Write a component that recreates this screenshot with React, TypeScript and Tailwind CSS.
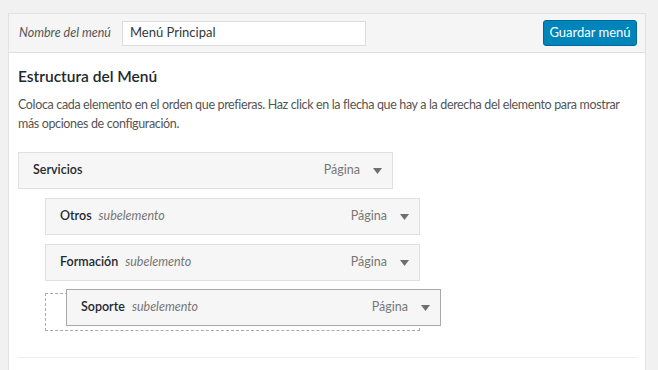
import React from 'react';

type Item = { title: string; sub?: boolean; depth: number };

const items: Item[] = [
  { title: 'Servicios', depth: 0 },
  { title: 'Otros', sub: true, depth: 1 },
  { title: 'Formación', sub: true, depth: 1 },
];

function Arrow() {
  return (
    <svg width="9" height="6" viewBox="0 0 9 6" className="ml-[13px]">
      <path d="M0 0h9L4.5 6z" fill="#6f6f6f" />
    </svg>
  );
}

function MenuItem({ title, sub, extra = '' }: { title: string; sub?: boolean; extra?: string }) {
  return (
    <div className={`w-[375px] h-[37px] flex items-center pl-[14px] pr-[10px] bg-[#f6f6f6] border ${extra}`}>
      <span className="font-semibold text-[#23282d]">{title}</span>
      {sub && <span className="ml-[7px] italic text-[#777]">subelemento</span>}
      <span className="ml-auto text-[#777]">Página</span>
      <Arrow />
    </div>
  );
}

export default function App() {
  return (
    <div
      className="w-[658px] h-[370px] bg-[#f1f1f1] pt-[13px] pl-[8px] overflow-hidden text-[12.5px] text-[#444]"
      style={{ fontFamily: 'Lato, "Open Sans", sans-serif' }}
    >
      <div className="w-[638px] h-[360px] border border-[#e2e2e2] bg-white">
        {/* Header */}
        <div className="h-[39px] bg-[#f5f5f5] border-b border-[#dedede] flex items-center pl-[9px] pr-[8px]">
          <span className="italic text-[#555] ml-[1px]">Nombre del menú</span>
          <div className="ml-[11px] w-[244px] h-[25px] bg-white border border-[#dcdcdc] flex items-center px-[7px] text-[#32373c] text-[13px]">
            Menú Principal
          </div>
          <button className="ml-auto w-[94px] h-[26px] rounded-[3px] bg-[#0085ba] border border-[#006799] text-white text-[13px]">
            Guardar menú
          </button>
        </div>

        {/* Body */}
        <div className="px-[9px]">
          <h3 className="mt-[13px] text-[15.5px] font-semibold text-[#23282d] leading-[20px]">Estructura del Menú</h3>
          <p className="mt-[9px] w-[624px] leading-[19px] text-[#555] tracking-[-0.35px]">
            Coloca cada elemento en el orden que prefieras. Haz click en la flecha que hay a la derecha del elemento para mostrar más opciones de configuración.
          </p>

          <div className="mt-[19px] flex flex-col gap-[9px]">
            {items.map((it) => (
              <div key={it.title} className={it.depth ? 'pl-[27px]' : ''}>
                <MenuItem title={it.title} sub={it.sub} extra="border-[#e0e0e0]" />
              </div>
            ))}
            <div className="pl-[27px] pt-[3px]">
              <div className="relative w-[375px] h-[38px] border border-dashed border-[#aaa]">
                <div className="absolute left-[20px] top-[-5px]">
                  <MenuItem title="Soporte" sub extra="border-[#a8a8a8]" />
                </div>
              </div>
            </div>
          </div>

          <div className="mt-[26px] border-t border-[#eeeeee] mr-[-1px]" />
        </div>
      </div>
    </div>
  );
}
